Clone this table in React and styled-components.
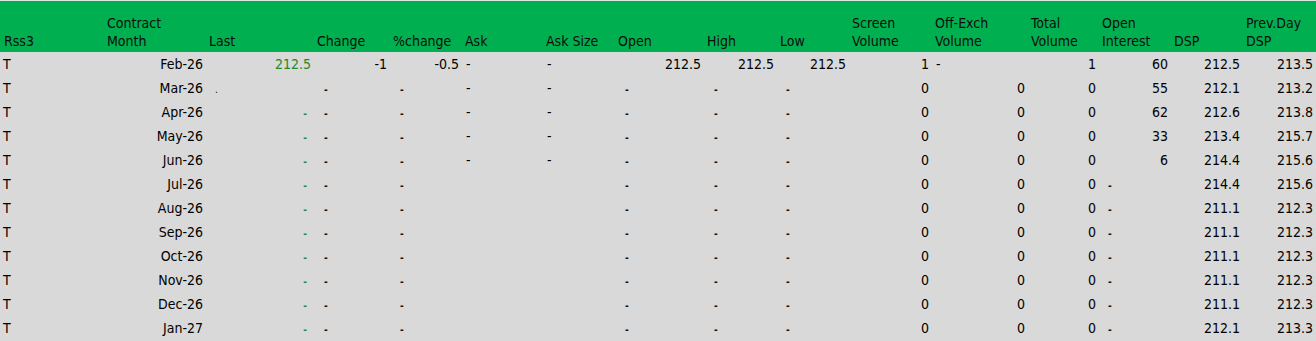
import React from "react";
import styled, { createGlobalStyle } from "styled-components";

const GlobalStyle = createGlobalStyle`
  html, body { margin: 0; padding: 0; background: #d9d9d9; }
  body { font-family: "DejaVu Sans Condensed", "DejaVu Sans", sans-serif; }
`;

const widths = [103, 102, 108, 76, 72, 81, 72, 89, 73, 72, 83, 96, 71, 72, 72, 74];

const Table = styled.div`
  display: grid;
  grid-template-columns: ${widths.map((w) => w + "px").join(" ")};
  grid-template-rows: 51px;
  grid-auto-rows: 24px;
  width: 1316px;
  border-top: 1px solid #dfe9e2;
  background: #d9d9d9;
  font-size: 14px;
  color: #000;
`;

const HeaderCell = styled.div`
  background: #00b050;
  display: flex;
  flex-direction: column;
  justify-content: flex-end;
  padding: 0 0 2px 4px;
  line-height: 18px;
  color: #0d0d0d;
  white-space: nowrap;
  overflow: hidden;
`;

const Cell = styled.div`
  height: 24px;
  box-sizing: border-box;
  padding-top: 1px;
  line-height: 23px;
  white-space: nowrap;
  overflow: hidden;
  text-align: ${(p) => (p.$right ? "right" : "left")};
  padding-left: ${(p) => (p.$right ? 0 : p.$pad ?? 3)}px;
  padding-right: ${(p) => (p.$right ? p.$pad ?? 2 : 0)}px;
  color: ${(p) => (p.$green ? "#238a23" : "#000")};
`;

const SmallDash = styled.span`
  font-size: 10px;
  font-weight: bold;
  color: ${(p) => (p.$green ? "#2f8a2f" : "#111")};
`;

const Dot = styled.span`
  font-size: 10px;
  color: #111;
`;

const headers = [
  ["Rss3"],
  ["Contract", "Month"],
  ["Last"],
  ["Change"],
  ["%change"],
  ["Ask"],
  ["Ask Size"],
  ["Open"],
  ["High"],
  ["Low"],
  ["Screen", "Volume"],
  ["Off-Exch", "Volume"],
  ["Total", "Volume"],
  ["Open", "Interest"],
  ["DSP"],
  ["Prev.Day", "DSP"],
];

// cell descriptors
const R = (v, green) => ({ k: "r", v, green });
const L = (v, pad) => ({ k: "l", v, pad });
const D = (pad = 5) => ({ k: "l", v: "-", pad });
const S = (pad = 10) => ({ k: "s", pad });
const G = () => ({ k: "g" });
const E = () => ({ k: "e" });
const P = (pad = 10) => ({ k: "p", pad });

const months = [
  "Feb-26", "Mar-26", "Apr-26", "May-26", "Jun-26", "Jul-26",
  "Aug-26", "Sep-26", "Oct-26", "Nov-26", "Dec-26", "Jan-27",
];
const oi = ["60", "55", "62", "33", "6"];
const dsp = ["212.5", "212.1", "212.6", "213.4", "214.4", "214.4", "211.1", "211.1", "211.1", "211.1", "211.1", "212.1"];
const prev = ["213.5", "213.2", "213.8", "215.7", "215.6", "215.6", "212.3", "212.3", "212.3", "212.3", "212.3", "213.3"];

const rows = months.map((m, i) => {
  if (i === 0) {
    return [
      L("T", 3), R(m), R("212.5", true), R("-1"), R("-0.5", false), D(5), D(5), R("212.5"),
      R("212.5"), R("212.5"), R("1"), D(5), R("1"), R(oi[0]), R(dsp[0]), R(prev[0], false),
    ];
  }
  return [
    L("T", 3),
    R(m),
    i === 1 ? P(10) : G(),
    S(11),
    S(11),
    i < 5 ? D(5) : E(),
    i < 5 ? D(5) : E(),
    S(11),
    S(11),
    S(10),
    R("0"),
    R("0"),
    R("0"),
    i < 5 ? R(oi[i]) : S(10),
    R(dsp[i]),
    R(prev[i]),
  ];
});

function renderCell(c, key, col) {
  const lastPad = col === 15 ? 3 : 2;
  switch (c.k) {
    case "r":
      return (
        <Cell key={key} $right $pad={lastPad} $green={c.green}>
          {c.v}
        </Cell>
      );
    case "l":
      return (
        <Cell key={key} $pad={c.pad}>
          {c.v}
        </Cell>
      );
    case "s":
      return (
        <Cell key={key} $pad={c.pad}>
          <SmallDash>-</SmallDash>
        </Cell>
      );
    case "g":
      return (
        <Cell key={key} $right $pad={6}>
          <SmallDash $green>-</SmallDash>
        </Cell>
      );
    case "p":
      return (
        <Cell key={key} $pad={c.pad}>
          <Dot>.</Dot>
        </Cell>
      );
    default:
      return <Cell key={key} />;
  }
}

export default function App() {
  return (
    <>
      <GlobalStyle />
      <Table>
        {headers.map((lines, i) => (
          <HeaderCell key={"h" + i}>
            {lines.map((l) => (
              <span key={l}>{l}</span>
            ))}
          </HeaderCell>
        ))}
        {rows.map((r, ri) => r.map((c, ci) => renderCell(c, ri + "-" + ci, ci)))}
      </Table>
    </>
  );
}
